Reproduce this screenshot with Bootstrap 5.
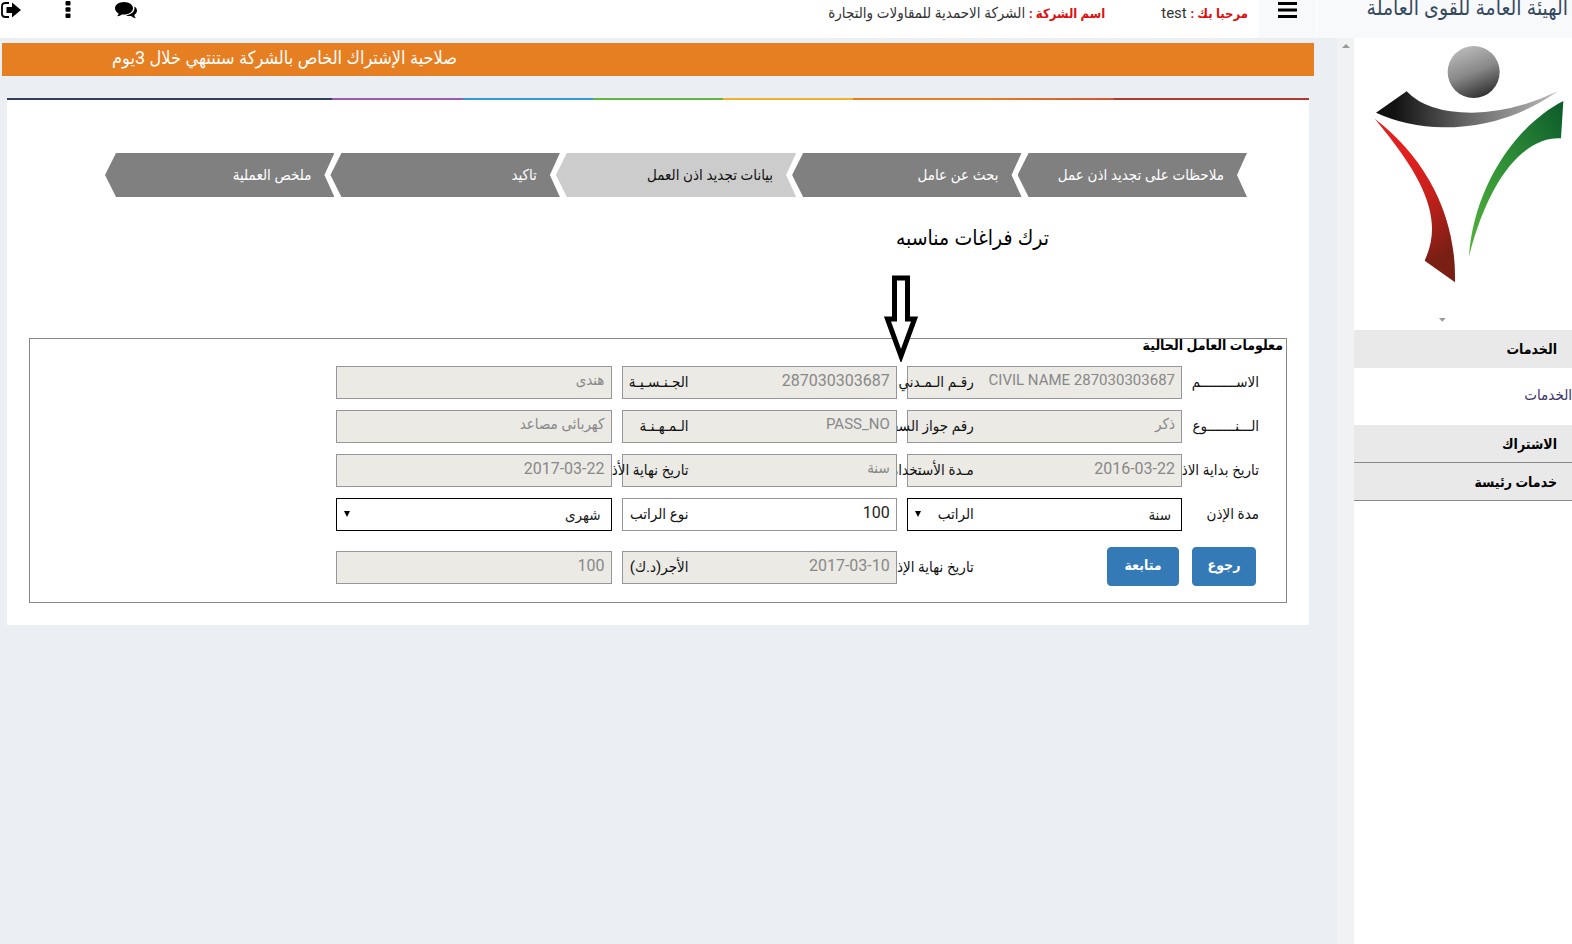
<!DOCTYPE html>
<html lang="ar" dir="rtl">
<head>
<meta charset="utf-8">
<meta name="viewport" content="width=device-width, initial-scale=1">
<title>الهيئة العامة للقوى العاملة</title>
<link href="https://cdn.jsdelivr.net/npm/bootstrap@5.3.0/dist/css/bootstrap.min.css" rel="stylesheet">
<style>
  body { font-family: Roboto, "DejaVu Sans Condensed", "DejaVu Sans", sans-serif; font-size: 15px; line-height: 20px; background: #ebeff3; color: #111; }
  a { text-decoration: none; }
  .topbar { height: 38px; background: #fff; }
  .brand-name { width: 255px; height: 38px; background: #f8f9fb; color: #34495e; font-size: 21px; line-height: 16px; padding-right: 4px; white-space: nowrap; }
  .menu-btn { width: 57px; height: 38px; background: #f8f9fb; margin-right: 1px; padding: 2px 0 0 0; border: 0; }
  .top-info { padding: 3px 11px 0 0; color: #333; white-space: nowrap; }
  .top-info strong { color: #e01010; font-size: 13px; }
  .top-info .company { margin-right: 56px; }
  .tools { gap: 42px; padding-left: 1px; direction: ltr; }
  .tools a { line-height: 0; }
  .side { width: 218px; background: #fff; }
  .side svg { display: block; }
  .side-head { display: block; height: 38px; background: #e9e9e9; color: #000; font-weight: bold; font-size: 14px; line-height: 38px; padding-right: 15px; }
  .side-line { border-bottom: 1px solid #888; }
  .side-link { height: 57px; line-height: 54px; color: #3c3468; display: block; }
  .gutter { width: 17px; background: #f1f2f3; padding-top: 6px; }
  .notice { background: #e67e22; color: #fff; height: 33px; margin: 5px 23px 22px 2px; padding-left: 110px; line-height: 30px; font-size: 18px; text-align: left; }
  .panel { background: #fff; margin: 0 28px 0 7px; padding: 0 22px 22px; }
  .rainbow { height: 2px; margin: 0 -22px 53px; background: linear-gradient(to right, #34405a 25%, #9b59b6 25% 35%, #3498db 35% 45%, #62b640 45% 55%, #f1b32e 55% 65%, #e67e22 65% 75%, #d3542f 85%, #b03a2e 85%); }
  .steps { margin: 0 40px 0 76px; height: 44px; list-style: none; padding: 0; }
  .steps li { flex: 229 1 0; margin-left: -4px; padding-right: 23px; line-height: 44px; color: #fff; background: #808080; white-space: nowrap; clip-path: polygon(11px 0, 100% 0, calc(100% - 10px) 50%, 100% 100%, 11px 100%, 0 50%); }
  .steps li:last-child { margin-left: 0; }
  .steps li.current { flex-grow: 241; background: #ccc; color: #111; }
  .note { height: 141px; position: relative; padding: 26px 238px 0 0; font-size: 21px; line-height: 30px; color: #000; }
  .note svg { position: absolute; right: 369px; top: 78px; z-index: 1; }
  .worker { border: 1px solid #888; padding: 0 27px 18px 0; min-height: 265px; }
  .worker-title { font-weight: bold; color: #000; font-size: 14px; line-height: 12px; margin: 0 -24px 15px 0; }
  .frow { height: 33px; margin-bottom: 11px; }
  .frow-last { margin: 20px 0 0; }
  .cell { flex: 0 0 calc(25% + 45px); height: 33px; }
  .cell + .cell { margin-right: -67px; }
  .cell label { width: 77px; flex: none; white-space: nowrap; line-height: 32px; }
  .cell .form-control, .cell .form-select { flex: 1 1 0; min-width: 0; height: 33px; border-radius: 0; border: 1px solid #95959b; padding: 0 6px 5px; font-size: 16px; line-height: 27px; background-color: #fff; color: #222; }
  .cell .form-control:disabled { background: #ebeae5; color: #888; opacity: 1; }
  .cell .form-control.wording { font-size: 15px; }
  .cell .form-select { border-color: #000; font-size: 15px; padding: 2px 10px 0; background: #fff url("data:image/svg+xml,%3Csvg xmlns='http://www.w3.org/2000/svg' viewBox='0 0 6 6'%3E%3Cpath d='M0 0h6L3 6z'/%3E%3C/svg%3E") no-repeat left 7px top 12px / 6px 6px; }
  .actions { gap: 13px; padding-right: 3px; }
  .actions .btn { height: 39px; margin-top: -4px; font-size: 14px; font-weight: bold; color: #fff; background: #337ab7; border-color: #337ab7; border-radius: 4px; width: 64px; padding: 0 0 3px; }
  .actions .btn + .btn { width: 72px; }
</style>
</head>
<body class="d-flex flex-column min-vh-100 overflow-hidden">
<header class="topbar d-flex">
  <div class="brand-name">الهيئة العامة للقوى العاملة</div>
  <button type="button" class="menu-btn d-flex justify-content-center" aria-label="القائمة">
    <svg width="19" height="16" viewBox="0 0 19 16"><path d="M0 0h19v3H0zM0 6.500h19v3H0zM0 13h19v3H0z"/></svg>
  </button>
  <div class="top-info d-flex flex-grow-1">
    <div><strong>مرحبا بك :</strong> <span>test</span></div>
    <div class="company"><strong>اسم الشركة :</strong> الشركة الاحمدية للمقاولات والتجارة</div>
  </div>
  <div class="tools d-flex">
    <a href="#" aria-label="خروج"><svg width="21" height="20" viewBox="0 0 21 20"><path d="M8 3H4.500Q1 3 1 6v8q0 3 3.500 3H8" fill="none" stroke="#000" stroke-width="1.800"/><path d="M5.500 7H11V2.500l9 7.500-9 7.500V13H5.500z"/></svg></a>
    <a href="#" aria-label="المزيد"><svg width="8" height="20" viewBox="0 0 8 20"><rect x="1.500" y="1" width="5" height="4.500" rx="1"/><rect x="1.500" y="7.300" width="5" height="4.500" rx="1"/><rect x="1.500" y="13.600" width="5" height="4.500" rx="1"/></svg></a>
    <a href="#" aria-label="الرسائل"><svg width="24" height="20" viewBox="0 0 24 20"><path d="M10 2c5 0 9 2.800 9 6.300s-4 6.300-9 6.300q-1 0-2-.2-2 1.700-5 1.900 1.300-1.200 1.700-2.900C2.500 12.300 1 10.400 1 8.300 1 4.800 5 2 10 2z"/><path d="M20.300 6.500c1.700 1 2.700 2.500 2.700 4.100 0 1.800-1 3.200-2.700 4.300q.2 1.700 1.700 3.300-3-.3-5-2.300-2.600.4-5-.5c4.700-.6 8.500-3.500 8.500-7.100q0-.9-.2-1.800z"/></svg></a>
  </div>
</header>
<div class="d-flex flex-grow-1">
  <aside class="side flex-shrink-0">
    <svg width="218" height="292" viewBox="72 24 654 876" role="img" aria-label="شعار الهيئة">
      <defs>
        <linearGradient id="ball" x1=".3" y1="0" x2=".7" y2="1"><stop offset="0" stop-color="#bbb"/><stop offset=".5" stop-color="#888"/><stop offset="1" stop-color="#2c2c2c"/></linearGradient>
        <linearGradient id="arms"><stop offset=".1" stop-color="#111"/><stop offset=".5" stop-color="#666"/><stop offset="1" stop-color="#bbb"/></linearGradient>
        <linearGradient id="red" x1="0" y1="0" x2=".3" y2="1"><stop offset=".3" stop-color="#e3201f"/><stop offset=".6" stop-color="#c8201c"/><stop offset="1" stop-color="#7a1f14"/></linearGradient>
        <linearGradient id="green" x1="1" y1="0" x2="0" y2="1"><stop offset="0" stop-color="#0c5a2b"/><stop offset=".5" stop-color="#2f8f37"/><stop offset="1" stop-color="#55b33c"/></linearGradient>
      </defs>
      <circle cx="431" cy="126" r="78" fill="url(#ball)"/>
      <path d="M138 248L230 184Q290 248 425 248Q550 247 683 184Q530 292 340 292Q230 290 138 248z" fill="url(#arms)"/>
      <path d="M134 266C290 385 380 560 375 757L284 692C330 590 315 480 134 266z" fill="url(#red)"/>
      <path d="M700 213L693 325C590 320 480 430 417 680C430 480 550 290 700 213z" fill="url(#green)"/>
      <path d="M327 864h20l-10 11z" fill="#999"/>
    </svg>
    <nav>
      <a href="#" class="side-head">الخدمات</a>
      <a href="#" class="side-link">الخدمات</a>
      <a href="#" class="side-head side-line">الاشتراك</a>
      <a href="#" class="side-head side-line">خدمات رئيسة</a>
    </nav>
  </aside>
  <div class="gutter flex-shrink-0 d-flex justify-content-center"><svg width="8" height="4" viewBox="0 0 8 4"><path d="M0 4h8L4 0z" fill="#999"/></svg></div>
  <main class="flex-grow-1">
    <div class="notice">صلاحية الإشتراك الخاص بالشركة ستنتهي خلال 3يوم</div>
    <section class="panel">
      <div class="rainbow"></div>
      <ol class="steps d-flex">
        <li>ملاحظات على تجديد اذن عمل</li>
        <li>بحث عن عامل</li>
        <li class="current">بيانات تجديد اذن العمل</li>
        <li>تاكيد</li>
        <li>ملخص العملية</li>
      </ol>
      <div class="note">ترك فراغات مناسبه
        <svg width="34" height="87" viewBox="0 0 34 87"><path d="M10.500 3h13v41h7L17 81 3.500 44h7z" fill="#fff" stroke="#000" stroke-width="5"/></svg>
      </div>
      <form class="worker">
        <div class="worker-title">معلومات العامل الحالية</div>
        <div class="frow d-flex">
          <div class="cell d-flex"><label for="f1">الاســـــــــم</label><input id="f1" class="form-control wording" value="CIVIL NAME 287030303687" disabled></div>
          <div class="cell d-flex"><label for="f2">رقـم الـمـدني</label><input id="f2" class="form-control" value="287030303687" disabled></div>
          <div class="cell d-flex"><label for="f3">الجـنـسـيـة</label><input id="f3" class="form-control wording" value="هندى" disabled></div>
        </div>
        <div class="frow d-flex">
          <div class="cell d-flex"><label for="f4">الـــنـــــــوع</label><input id="f4" class="form-control wording" value="ذكر" disabled></div>
          <div class="cell d-flex"><label for="f5">رقم جواز السفر</label><input id="f5" class="form-control wording" value="PASS_NO" disabled></div>
          <div class="cell d-flex"><label for="f6">الـمـهـنـة</label><input id="f6" class="form-control wording" value="كهربائى مصاعد" disabled></div>
        </div>
        <div class="frow d-flex">
          <div class="cell d-flex"><label for="f7">تاريخ بداية الاذن</label><input id="f7" class="form-control text-end" value="2016-03-22" dir="ltr" disabled></div>
          <div class="cell d-flex"><label for="f8">مـدة الأستخدام</label><input id="f8" class="form-control wording" value="سنة" disabled></div>
          <div class="cell d-flex"><label for="f9">تاريخ نهاية الأذن</label><input id="f9" class="form-control text-end" value="2017-03-22" dir="ltr" disabled></div>
        </div>
        <div class="frow d-flex">
          <div class="cell d-flex"><label for="f10">مدة الإذن</label><select id="f10" class="form-select"><option>سنة</option></select></div>
          <div class="cell d-flex"><label for="f11">الراتب</label><input id="f11" class="form-control" value="100"></div>
          <div class="cell d-flex"><label for="f12">نوع الراتب</label><select id="f12" class="form-select"><option>شهرى</option></select></div>
        </div>
        <div class="frow frow-last d-flex">
          <div class="cell actions d-flex"><button type="button" class="btn">رجوع</button><button type="button" class="btn">متابعة</button></div>
          <div class="cell d-flex"><label for="f13">تاريخ نهاية الإذن</label><input id="f13" class="form-control text-end" value="2017-03-10" dir="ltr" disabled></div>
          <div class="cell d-flex"><label for="f14">الأجر(د.ك)</label><input id="f14" class="form-control" value="100" disabled></div>
        </div>
      </form>
    </section>
  </main>
</div>
<script src="https://cdn.jsdelivr.net/npm/bootstrap@5.3.0/dist/js/bootstrap.bundle.min.js"></script>
</body>
</html>
